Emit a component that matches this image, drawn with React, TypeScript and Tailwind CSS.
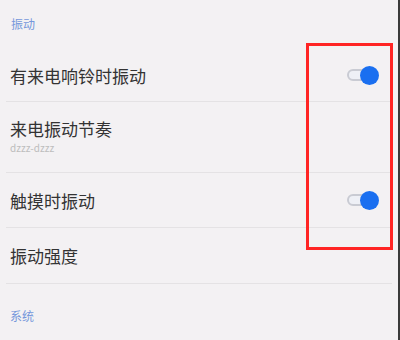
import React from 'react'

const Toggle = () => (
  <div className="relative w-[32px] h-[19px] flex items-center">
    <div className="w-[24px] h-[12px] rounded-full border-2 border-[#c9cbd3] bg-[#eef0f6]" />
    <div className="absolute right-0 top-0 w-[19px] h-[19px] rounded-full bg-[#1a6ff0]" />
  </div>
)

const Divider = () => <div className="mx-[6px] h-px bg-[#e4e2e4]" />

export default function App() {
  return (
    <div
      className="relative w-[400px] h-[340px] overflow-hidden bg-[#f3f1f3] text-[#333333]"
      style={{ fontFamily: '"Noto Sans CJK SC", "Noto Sans", sans-serif' }}
    >
      <div className="flex flex-col pr-[2px]">
        <div className="h-[49px] pl-[11px] pt-[15px] text-[12px] leading-[18px] text-[#7597db]">振动</div>
        <div className="h-[52px] pl-[10px] pr-[19px] flex items-center justify-between">
          <span className="text-[17px] leading-none">有来电响铃时振动</span>
          <Toggle />
        </div>
        <Divider />
        <div className="h-[70px] pl-[10px] flex flex-col justify-center">
          <span className="text-[17px] leading-[18px]">来电振动节奏</span>
          <span className="mt-[4px] text-[10px] leading-[12px] text-[#bdbdbd]">dzzz-dzzz</span>
        </div>
        <Divider />
        <div className="h-[54px] pl-[10px] pr-[19px] flex items-center justify-between">
          <span className="text-[17px] leading-none">触摸时振动</span>
          <Toggle />
        </div>
        <Divider />
        <div className="h-[55px] pl-[10px] flex items-center">
          <span className="text-[17px] leading-none">振动强度</span>
        </div>
        <Divider />
        <div className="h-[56px] pl-[10px] pt-[24px]">
          <span className="block text-[12px] leading-[16px] text-[#7597db]">系统</span>
        </div>
      </div>
      <div className="absolute left-[306px] top-[43px] w-[87px] h-[207px] border-[3px] border-[#ff2424]" />
      <div className="absolute right-0 top-0 w-[2px] h-full bg-[#3a3a3a]" />
    </div>
  )
}
